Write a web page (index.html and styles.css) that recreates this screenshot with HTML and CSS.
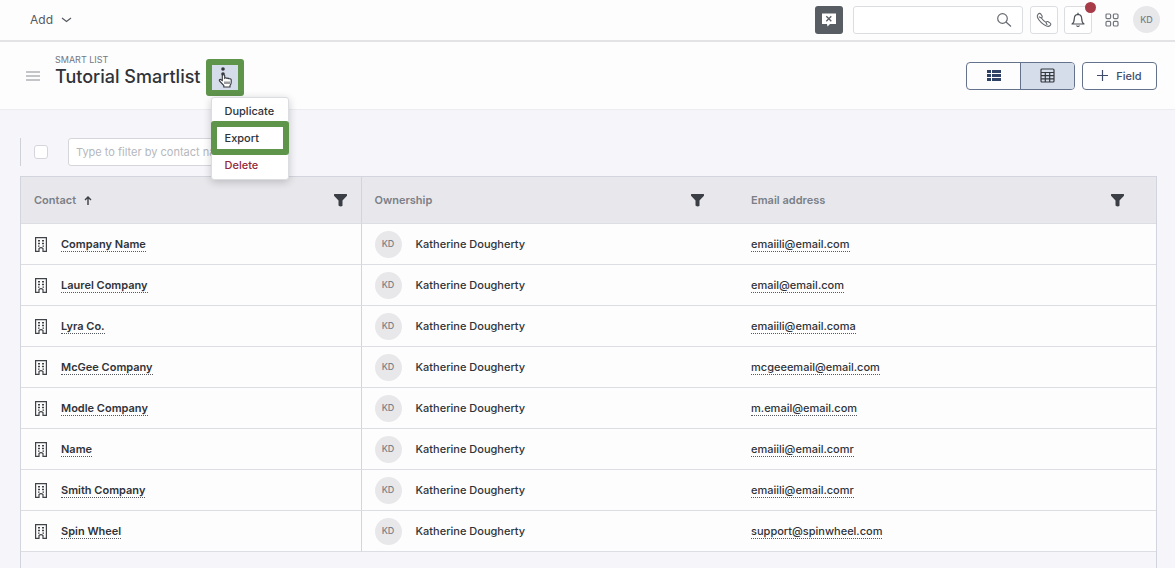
FILE: index.html
```html
<!DOCTYPE html>
<html lang="en">
<head>
    <meta charset="UTF-8">
    <meta name="viewport" content="width=device-width, initial-scale=1.0">
    <title>Tutorial Smartlist</title>
    <link rel="stylesheet" href="styles.css">
</head>
<body>

    <svg class="sprite" aria-hidden="true">
        <symbol id="building" viewBox="0 0 12 15">
            <path d="M.6 14.400V.6h10.800v13.800H8V11.500q-2-1.600-4 0v2.900z" fill="none" stroke="#404348" stroke-width="1.200"/>
            <path d="M3 3h2v1.500H3zM7 3h2v1.500H7zM3 5.800h2v1.500H3zM7 5.800h2v1.500H7zM3 8.500h1.500v1.200H3zM7.500 8.500H9v1.200H7.500z" fill="#404348"/>
        </symbol>
        <symbol id="funnel" viewBox="0 0 13 13">
            <path d="M.5 0h12q.5 0 .5.500V1.800L8.500 6.500v5.300q-1.700 1.700-4-.300v-5L0 1.800V.5Q0 0 .5 0z" fill="#3b3e44"/>
        </symbol>
    </svg>

    <header class="topbar">
        <button class="add-button">Add
            <svg width="11" height="6" viewBox="0 0 11 6"><path d="M1 1l4.500 3.500L10 1" fill="none" stroke="#55595f" stroke-width="1.200"/></svg>
        </button>
        <div class="topbar-tools">
            <button class="chat-button" aria-label="Close chat">
                <svg width="16" height="16" viewBox="0 0 16 16">
                    <path d="M1 1.500h14v10.500H9L6.500 14.500 6 12H1z" fill="#fff"/>
                    <path d="M5.300 4.200l5 5M10.300 4.200l-5 5" stroke="#575d62" stroke-width="1.300"/>
                </svg>
            </button>
            <div class="search">
                <input type="search" aria-label="Search">
                <svg width="16" height="16" viewBox="0 0 16 16" fill="none" stroke="#666a70" stroke-width="1.200">
                    <circle cx="6.500" cy="6.500" r="4.800"/><path d="M10 10l5 4.500"/>
                </svg>
            </div>
            <button class="icon-button" aria-label="Calls">
                <svg width="16" height="16" viewBox="0 0 16 16" fill="none" stroke="#666a70" stroke-width="1.100" stroke-linejoin="round">
                    <path d="M1.800 2.600Q3.400.500 4.800 2l1.300 2q.6 1.200-.7 2 1.700 2.600 4.600 4.400.9-1.300 2.200-.6l2 1.300q1.300 1-.1 2.400-1.500 1.400-3.600.500Q4.200 11 1.500 5.500 1 3.600 1.800 2.600z"/>
                    <path d="M2.800 4.800l2.600 1.200M10 10.400l1.200 2.600"/>
                </svg>
            </button>
            <button class="icon-button" aria-label="Notifications">
                <svg width="14" height="16" viewBox="0 0 14 16" fill="none" stroke="#4b4f55" stroke-width="1.200" stroke-linejoin="round">
                    <path d="M1 12q2.300-1.500 2.300-5.500Q3.500 2.500 7 2.300q3.500.200 3.700 4.200 0 4 2.300 5.500z"/>
                    <path d="M7 .800v1.500M5.500 13.500q1.500 2 3 0"/>
                </svg>
                <span class="badge"></span>
            </button>
            <button class="apps-button" aria-label="Apps">
                <svg width="14" height="14" viewBox="0 0 14 14" fill="none" stroke="#74777d" stroke-width="1.200">
                    <rect x="1" y="1" width="4.600" height="4.600" rx="1"/><rect x="8.400" y="1" width="4.600" height="4.600" rx="1"/>
                    <rect x="1" y="8.400" width="4.600" height="4.600" rx="1"/><rect x="8.400" y="8.400" width="4.600" height="4.600" rx="1"/>
                </svg>
            </button>
            <span class="avatar">KD</span>
        </div>
    </header>

    <section class="list-header">
        <button class="menu-button" aria-label="Menu">
            <svg width="14" height="10" viewBox="0 0 14 10" stroke="#8c8e94" stroke-width="1.200"><path d="M0 1h14M0 5h14M0 9h14"/></svg>
        </button>
        <div class="list-title">
            <p>SMART LIST</p>
            <h1>Tutorial Smartlist</h1>
        </div>
        <div class="actions">
            <button class="more-button marked" aria-label="List actions">
                <svg width="16" height="22" viewBox="0 0 16 22">
                    <circle cx="6" cy="3" r="1.800" fill="#35383d"/><circle cx="6" cy="8" r="1.800" fill="#35383d"/>
                    <path d="M5.300 14.500V9.500q1.300-1.500 2.400 0v2.700q1.200-.9 2.200.2 1.200-.7 2.200.4 1.700-.4 2.100.8v3.200q-.2 1.700-1.200 2.600v1.600H6.800v-1.500L2.500 15q-.6-1.600.9-1.600z" fill="#fff" stroke="#35383d" stroke-width="1.100"/>
                    <path d="M8 15.500v2.500M10 15.500v2.500M12 15.500v2.500" stroke="#35383d" stroke-width="1"/>
                </svg>
            </button>
            <div class="menu">
                <button>Duplicate</button>
                <button class="marked">Export</button>
                <button class="delete">Delete</button>
            </div>
        </div>
        <div class="view-tools">
            <div class="view-switch">
                <button aria-label="List view">
                    <svg width="14" height="12" viewBox="0 0 14 12" fill="#2f4266"><path d="M0 0h4v3H0zM5 0h9v3H5zM0 4h4v3H0zM5 4h9v3H5zM0 8h4v3H0zM5 8h9v3H5z"/></svg>
                </button>
                <button class="active" aria-label="Table view">
                    <svg width="15" height="15" viewBox="0 0 15 15" fill="none" stroke="#35383d" stroke-width="1.200"><rect x="1" y="1" width="13" height="13" rx="1"/><path d="M1 4.500h13M1 7.700h13M1 10.900h13M5.300 4.500V14M9.700 4.500V14"/></svg>
                </button>
            </div>
            <button class="field-button">
                <svg width="11" height="11" viewBox="0 0 11 11" stroke="#3f4d6b" stroke-width="1.200"><path d="M0 5.500h11M5.500 0v11"/></svg>
                Field
            </button>
        </div>
    </section>

    <main>
        <div class="filter-bar">
            <input type="checkbox" aria-label="Select all">
            <input type="text" aria-label="Filter by contact name" placeholder="Type to filter by contact name">
        </div>
        <div class="table-wrap">
            <table>
                <thead>
                    <tr>
                        <th class="contact-col"><div class="heading"><span>Contact</span>
                            <svg width="8" height="9" viewBox="0 0 8 9" fill="none" stroke="#3b3e44" stroke-width="1.400"><path d="M4 9V1M1 4l3-3 3 3"/></svg>
                            <button aria-label="Filter contact"><svg width="13" height="13"><use href="#funnel"/></svg></button></div></th>
                        <th class="owner-col"><div class="heading"><span>Ownership</span>
                            <button aria-label="Filter ownership"><svg width="13" height="13"><use href="#funnel"/></svg></button></div></th>
                        <th class="email-col"><div class="heading"><span>Email address</span>
                            <button aria-label="Filter email address"><svg width="13" height="13"><use href="#funnel"/></svg></button></div></th>
                    </tr>
                </thead>
                <tbody id="contacts"></tbody>
            </table>
        </div>
    </main>

    <script>
        const contacts = [
            ['Company Name', 'emaiili@email.com'],
            ['Laurel Company', 'email@email.com'],
            ['Lyra Co.', 'emaiili@email.coma'],
            ['McGee Company', 'mcgeeemail@email.com'],
            ['Modle Company', 'm.email@email.com'],
            ['Name', 'emaiili@email.comr'],
            ['Smith Company', 'emaiili@email.comr'],
            ['Spin Wheel', 'support@spinwheel.com']
        ];

        document.getElementById('contacts').innerHTML = contacts.map(([name, email]) => `
            <tr>
                <td class="contact-col"><div class="cell"><svg width="12" height="15"><use href="#building"/></svg><a class="company" href="#">${name}</a></div></td>
                <td class="owner-col"><div class="cell"><span class="avatar">KD</span><span>Katherine Dougherty</span></div></td>
                <td class="email-col"><div class="cell"><a href="mailto:${email}">${email}</a></div></td>
            </tr>`).join('');
    </script>

</body>
</html>
```
FILE: styles.css
```css
* {
    box-sizing: border-box;
}

body {
    margin: 0;
    min-height: 100vh;
    display: flex;
    flex-direction: column;
    font-family: Inter, 'Liberation Sans', sans-serif;
    font-size: 11px;
    font-weight: 500;
    line-height: 16px;
    background-color: #f5f5fa;
    color: #303338;
}

button {
    display: flex;
    align-items: center;
    justify-content: center;
    padding: 0;
    border: none;
    background: none;
    font: inherit;
    color: inherit;
    cursor: pointer;
}

.sprite {
    display: none;
}

.topbar {
    display: flex;
    align-items: center;
    justify-content: space-between;
    height: 42px;
    padding: 0 15px 1px 30px;
    background-color: #fdfdfe;
    border-bottom: 2px solid #e3e3e5;
}

.add-button {
    gap: 8px;
    font-size: 12px;
    font-weight: 400;
    color: #55595f;
}

.topbar-tools {
    display: flex;
    align-items: center;
}

.chat-button {
    width: 28px;
    height: 28px;
    margin-right: 10px;
    border-radius: 3px;
    background-color: #575d62;
}

.search {
    display: flex;
    align-items: center;
    width: 170px;
    height: 28px;
    margin-right: 7px;
    padding: 0 10px;
    border: 1px solid #dcdde0;
    border-radius: 3px;
    background-color: #fff;
}

.search input {
    flex: 1;
    min-width: 0;
    border: none;
    outline: none;
    background: none;
}

.icon-button {
    position: relative;
    width: 28px;
    height: 28px;
    margin-right: 6px;
    border: 1px solid #dcdde0;
    border-radius: 3px;
    background-color: #fff;
}

.badge {
    position: absolute;
    top: -5px;
    right: -5px;
    width: 11px;
    height: 11px;
    border-radius: 50%;
    background-color: #a83b48;
}

.apps-button {
    margin: 0 14px 0 7px;
}

.avatar {
    display: flex;
    align-items: center;
    justify-content: center;
    width: 27px;
    height: 27px;
    border-radius: 50%;
    background-color: #e8e8eb;
    font-size: 9px;
    font-weight: 500;
    color: #7b7f87;
}

.list-header {
    display: flex;
    align-items: center;
    height: 68px;
    padding: 0 18px 0 26px;
    background-color: #fdfdfe;
    border-bottom: 1px solid #ececf0;
}

.list-title {
    margin: 0 6px 10px 15px;
}

.list-title p {
    margin: 0;
    font-size: 9px;
    font-weight: 400;
    line-height: 12px;
    color: #74777e;
}

.list-title h1 {
    margin: 0;
    font-size: 18px;
    font-weight: 500;
    line-height: 22px;
}

.actions {
    position: relative;
    margin-top: 3px;
    padding: 6px 0;
}

.more-button {
    width: 26px;
    height: 25px;
    margin-left: 5px;
    background-color: #d5dcea;
}

.marked {
    position: relative;
}

.marked::after {
    content: '';
    position: absolute;
    inset: -6px;
    border: 6px solid #5f944b;
    border-radius: 3px;
}

.menu {
    position: absolute;
    z-index: 1;
    top: 38px;
    left: 4px;
    width: 78px;
    border: 1px solid #dcdde1;
    border-radius: 3px;
    background-color: #fff;
    box-shadow: 0 2px 8px rgba(0, 0, 0, 0.2);
}

.menu button {
    width: 100%;
    height: 27px;
    justify-content: flex-start;
    padding-left: 13px;
}

.menu .marked::after {
    inset: -4px -1px -3px;
}

.menu .delete {
    color: #93283b;
}

.view-tools {
    display: flex;
    gap: 7px;
    margin-left: auto;
}

.view-switch {
    display: flex;
    width: 109px;
    height: 28px;
    border: 1px solid #64728c;
    border-radius: 4px;
    overflow: hidden;
}

.view-switch button {
    flex: 1;
}

.view-switch .active {
    border-left: 1px solid #64728c;
    background-color: #d5dcea;
}

.field-button {
    gap: 8px;
    width: 75px;
    height: 28px;
    border: 1px solid #64728c;
    border-radius: 4px;
    background-color: #fff;
    color: #3f4d6b;
}

main {
    flex: 1;
    display: flex;
    flex-direction: column;
    padding: 28px 18px 0 20px;
}

.filter-bar {
    display: flex;
    align-items: center;
    gap: 20px;
    height: 28px;
    margin-bottom: 10px;
    padding-left: 13px;
    border-left: 1px solid #cfd1d9;
}

.filter-bar input[type="checkbox"] {
    appearance: none;
    width: 14px;
    height: 14px;
    margin: 0;
    border: 1px solid #d5d6db;
    border-radius: 3px;
    background-color: #fff;
}

.filter-bar input[type="text"] {
    width: 200px;
    height: 28px;
    padding: 0 7px;
    border: 1px solid #d5d6db;
    border-radius: 3px;
    background-color: #fff;
    font: inherit;
    font-weight: 400;
}

.filter-bar input::placeholder {
    color: #b5b7bd;
}

.table-wrap {
    flex: 1;
    border: 1px solid #d2d5dd;
    border-bottom: none;
}

table {
    width: 100%;
    table-layout: fixed;
    border-collapse: separate;
    border-spacing: 0;
}

th,
td {
    height: 41px;
    padding: 0 14px 0 13px;
    border-bottom: 1px solid #dddee3;
    text-align: left;
}

th {
    height: 47px;
    background-color: #e8e8ec;
    font-weight: 600;
    color: #7b7f87;
}

td {
    background-color: #fdfdfe;
}

.contact-col {
    width: 30%;
    border-right: 1px solid #d2d5dd;
}

td.contact-col {
    padding-left: 14px;
}

.owner-col {
    width: 33%;
}

.owner-col,
.email-col {
    padding-right: 32px;
}

.email-col {
    padding-left: 15px;
}

.heading {
    display: flex;
    align-items: center;
    gap: 8px;
}

.heading button {
    margin-left: auto;
}

.cell {
    display: flex;
    align-items: center;
    gap: 14px;
}

.cell a {
    border-bottom: 1px dotted #55595f;
    line-height: 14px;
    color: inherit;
    text-decoration: none;
}

.cell .company {
    font-weight: 600;
}
```
